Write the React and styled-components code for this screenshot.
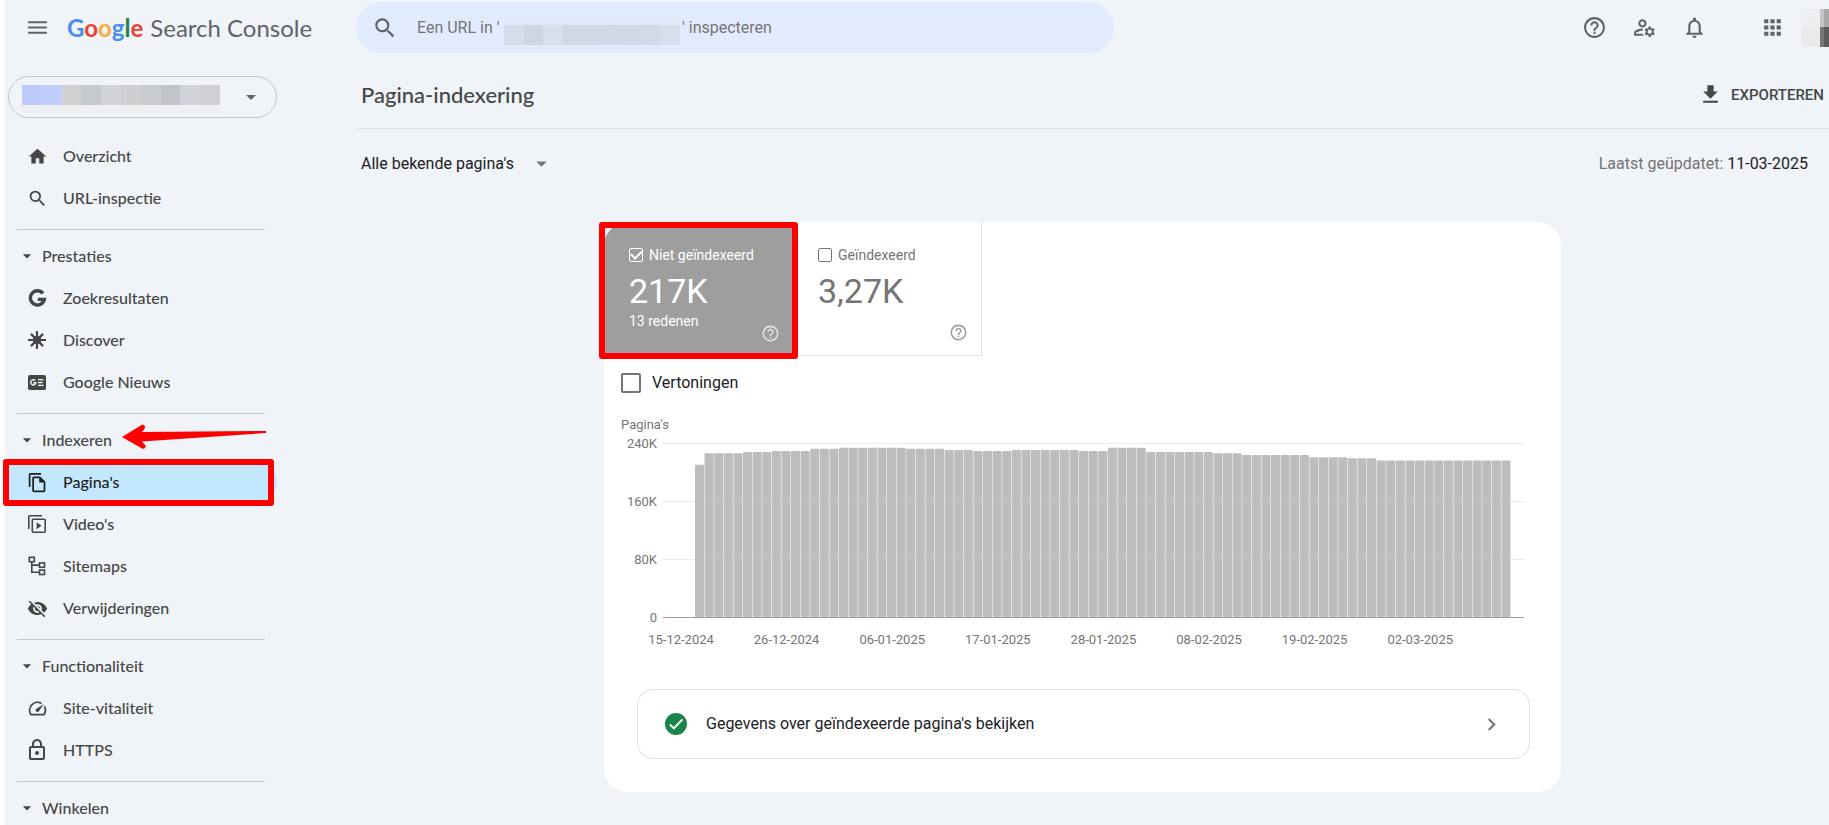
import React from 'react';
import styled, { createGlobalStyle } from 'styled-components';
import {
  MdApps,
  MdArrowDropDown,
  MdChevronRight,
  MdFileDownload,
  MdHelpOutline,
  MdHome,
  MdMenu,
  MdNotificationsNone,
  MdOutlineFileCopy,
  MdOutlineLock,
  MdOutlineManageAccounts,
  MdSearch,
  MdSpeed,
  MdVisibilityOff,
} from 'react-icons/md';

const GlobalStyles = createGlobalStyle`
  :root {
    --bg: #f0f3f8;
    --text: #202124;
    --nav: #444746;
    --muted: #757575;
    --line: #dfe1e5;
    --mark: #ff0000;
    --brand-font: Lato, 'Open Sans', sans-serif;
    --body-font: Roboto, 'Liberation Sans', sans-serif;
  }

  * {
    box-sizing: border-box;
  }

  html,
  body {
    margin: 0;
    overflow: hidden;
  }

  body {
    background: #fff;
    color: var(--text);
    font-family: var(--body-font);
    font-size: 16px;
    line-height: 20px;
  }

  button,
  input,
  select {
    font: inherit;
    color: inherit;
    margin: 0;
    padding: 0;
    border: none;
    background: none;
  }

  svg {
    display: block;
    flex: none;
  }
`;

const PageStyles = styled.div`
  display: grid;
  grid-template-columns: 351px minmax(0, 1fr);
  align-content: start;
  height: 100vh;
  margin-left: 5px;
  background: var(--bg);
`;

const BrandStyles = styled.div`
  display: flex;
  align-items: center;
  gap: 17px;
  height: 55px;
  padding-left: 20px;
  color: #5f6368;

  a {
    display: flex;
    gap: 7px;
    color: inherit;
    font-family: var(--brand-font);
    font-size: 24px;
    line-height: 32px;
    text-decoration: none;
  }
`;

const Letter = styled.span`
  color: ${(props) => props.$color};
  font-weight: 700;
`;

const TopBarStyles = styled.header`
  display: flex;
  align-items: center;
  height: 55px;
`;

const SearchStyles = styled.form`
  display: flex;
  align-items: center;
  flex: 0 1 758px;
  height: 51px;
  padding-left: 16px;
  border-radius: 26px;
  background: #e2ebfd;
  color: var(--muted);

  svg {
    margin-right: 19px;
    color: #5f6368;
  }

  input {
    width: 87px;
    outline: none;
  }

  input::placeholder {
    color: inherit;
    opacity: 1;
  }

  label {
    margin-left: 2px;
  }
`;

const Mosaic = styled.span`
  display: flex;
  width: ${(props) => props.$width}px;
  height: 28px;
  padding: ${(props) => (props.$low ? '8px 0 0' : '0 0 8px')};
  margin-top: ${(props) => (props.$low ? 7 : 4)}px;
  background: ${(props) => props.$haze};

  i {
    flex: 1;
  }
`;

const ActionsStyles = styled.div`
  display: flex;
  align-items: center;
  margin-left: auto;
  color: #5f6368;
`;

const IconButton = styled.button`
  display: flex;
  justify-content: center;
  width: 50px;
  margin-left: ${(props) => (props.$apart ? 28 : 0)}px;
`;

const Avatar = styled.span`
  display: grid;
  grid-template-columns: 19px 4px 5px;
  grid-template-rows: 18px 20px;
  margin-left: 4px;
`;

const Swatch = styled.i`
  background: ${(props) => props.$color};
`;

const SideStyles = styled.nav`
  color: var(--nav);
  font-family: var(--brand-font);
  font-weight: 500;
  padding-top: 21px;
`;

const PropertyButton = styled.button`
  display: flex;
  align-items: center;
  justify-content: space-between;
  width: 269px;
  height: 42px;
  margin: 0 0 17px 3px;
  padding: 0 13px;
  border: 1px solid #c4c7c5;
  border-radius: 21px;
  color: #5f6368;
`;

const NavItem = styled.a`
  position: relative;
  display: flex;
  align-items: center;
  gap: 14px;
  width: 269px;
  height: 42px;
  margin-left: 3px;
  padding-left: 17px;
  border-radius: 0 21px 21px 0;
  background: ${(props) => (props.$active ? '#c2e7ff' : 'none')};
  color: ${(props) => (props.$active ? '#1f1f1f' : 'inherit')};
  text-decoration: none;
`;

const NavIcon = styled.span`
  display: flex;
  justify-content: center;
  width: 24px;
`;

const GroupButton = styled.button`
  position: relative;
  display: flex;
  align-items: center;
  gap: 5px;
  height: 42px;
  padding-left: 12px;
`;

const Divider = styled.hr`
  width: 248px;
  height: 1px;
  margin: 10px 0 5px 12px;
  border: none;
  background: #c4c7c5;
`;

const MarkBox = styled.span`
  position: absolute;
  z-index: 1;
  inset: ${(props) => props.$inset};
  border: 6px solid var(--mark);
  border-radius: 3px;
  pointer-events: none;
`;

const MarkArrow = styled.svg`
  position: absolute;
  left: 117px;
  top: 5px;
`;

const MainStyles = styled.main`
  min-width: 0;
  padding-left: 1px;
`;

const TitleBar = styled.div`
  display: flex;
  align-items: center;
  justify-content: space-between;
  height: 74px;
  padding: 6px 5px 0 4px;
  border-bottom: 1px solid var(--line);

  h1 {
    margin: 0;
    color: var(--nav);
    font-family: var(--brand-font);
    font-size: 22px;
    font-weight: 500;
    line-height: 28px;
  }

  button {
    display: flex;
    align-items: center;
    gap: 8px;
    color: var(--nav);
    font-size: 15px;
    font-weight: 500;
  }
`;

const FilterBar = styled.div`
  display: flex;
  align-items: center;
  justify-content: space-between;
  height: 69px;
  padding: 0 21px 0 4px;

  p {
    margin: 0;
    color: var(--muted);
  }

  strong {
    color: var(--text);
    font-weight: 400;
  }
`;

const SelectWrap = styled.label`
  display: grid;
  align-items: center;
  width: 193px;

  > * {
    grid-area: 1 / 1;
  }

  select {
    appearance: none;
    width: 100%;
  }

  svg {
    justify-self: end;
    color: var(--muted);
    pointer-events: none;
  }
`;

const ContentStyles = styled.div`
  padding: 24px 21px 0 0;
`;

const CardStyles = styled.section`
  max-width: 957px;
  margin: 0 auto;
  padding-bottom: 33px;
  border-radius: 24px;
  background: #fff;
`;

const TilesStyles = styled.div`
  display: flex;
`;

const TileStyles = styled.div`
  position: relative;
  display: flex;
  flex-direction: column;
  width: 189px;
  height: 134px;
  padding: 23px 0 0 25px;
  border: solid var(--line);
  border-width: ${(props) => (props.$active ? '0' : '0 1px 1px 0')};
  border-radius: ${(props) => (props.$active ? '24px 0 0 0' : '0')};
  background: ${(props) => (props.$active ? '#9e9e9e' : '#fff')};
  color: ${(props) => (props.$active ? '#fff' : 'var(--muted)')};
  font-size: 14px;

  label {
    display: flex;
    align-items: center;
    gap: 6px;
  }

  strong {
    margin: 8px 0 2px;
    font-size: 34px;
    font-weight: 400;
    line-height: 36px;
  }

  small {
    font-size: 14px;
  }

  button {
    position: absolute;
    right: 13px;
    bottom: 13px;
    opacity: 0.7;
  }
`;

const TickBox = styled.input`
  display: grid;
  place-items: center;
  flex: none;
  appearance: none;
  width: ${(props) => props.$size}px;
  height: ${(props) => props.$size}px;
  border: ${(props) => (props.$size > 16 ? 2 : 1)}px solid currentColor;
  border-radius: 2px;

  &:checked::after {
    content: '';
    width: 9px;
    height: 5px;
    margin-bottom: 3px;
    border: solid currentColor;
    border-width: 0 0 2px 2px;
    transform: rotate(-45deg);
  }
`;

const ImpressionsLabel = styled.label`
  display: flex;
  align-items: center;
  gap: 11px;
  padding: 17px 17px 0;

  input {
    color: var(--muted);
  }
`;

const ChartStyles = styled.figure`
  margin: 0;
  padding: 22px 37px 0 17px;
  color: var(--muted);
  font-size: 13px;

  svg {
    width: 100%;
    height: auto;
    overflow: visible;
  }

  text {
    fill: var(--muted);
    font-size: 13px;
  }
`;

const DetailLink = styled.a`
  display: flex;
  align-items: center;
  height: 70px;
  margin: 42px 31px 0 33px;
  padding: 0 25px 0 27px;
  border: 1px solid var(--line);
  border-radius: 16px;
  color: var(--text);
  text-decoration: none;

  span {
    flex: 1;
    margin-left: 19px;
  }
`;

const GoogleIcon = () => (
  <svg width="19" height="19" viewBox="0 0 19 19" fill="none" stroke="currentColor" strokeWidth="3.4">
    <path d="M15 4.4A7.1 7.1 0 1 0 16.4 10.4H9.8" />
  </svg>
);

const DiscoverIcon = () => (
  <svg width="18" height="18" viewBox="0 0 18 18" stroke="currentColor" strokeWidth="2.2">
    <path d="M9 0v18M0 9h18M2.9 2.9l12.2 12.2M15.1 2.9L2.9 15.1" />
    <circle cx="9" cy="9" r="3" fill="currentColor" />
  </svg>
);

const NewsIcon = () => (
  <svg width="18" height="15" viewBox="0 0 18 15" fill="none" stroke="#f0f3f8" strokeWidth="1.4">
    <rect width="18" height="15" rx="1.8" fill="currentColor" stroke="none" />
    <path d="M7.2 5.5A2.6 2.6 0 1 0 7.9 7.8H5.3M10 4.6h5.6M10 7.5h4.6M10 10.4h5.6" />
  </svg>
);

const VideoIcon = () => (
  <svg width="18" height="18" viewBox="0 0 18 18" fill="none" stroke="currentColor" strokeWidth="1.6">
    <path d="M.8 14V1.8a1 1 0 0 1 1-1H14" />
    <rect x="4.3" y="4.3" width="12.9" height="12.9" rx="1" />
    <path d="M8.6 7.2v7l5-3.5z" fill="currentColor" stroke="none" />
  </svg>
);

const SitemapIcon = () => (
  <svg width="18" height="20" viewBox="0 0 18 20" fill="none" stroke="currentColor" strokeWidth="1.6">
    <rect x="1.3" y="1.3" width="5" height="4.4" />
    <rect x="11.5" y="6.9" width="5" height="4.4" />
    <rect x="11.5" y="14.1" width="5" height="4.4" />
    <path d="M3.8 5.7v10.6h7.7M3.8 9.1h7.7" />
  </svg>
);

const CheckIcon = () => (
  <svg width="22" height="22" viewBox="0 0 22 22" fill="none">
    <circle cx="11" cy="11" r="11" fill="#188548" />
    <path d="M4.8 11.4l4 4 8.6-9" stroke="#fff" strokeWidth="2" />
  </svg>
);

const navGroups = [
  {
    items: [
      { name: 'Overzicht', icon: <MdHome size={21} /> },
      { name: 'URL-inspectie', icon: <MdSearch size={21} /> },
    ],
  },
  {
    title: 'Prestaties',
    items: [
      { name: 'Zoekresultaten', icon: <GoogleIcon /> },
      { name: 'Discover', icon: <DiscoverIcon /> },
      { name: 'Google Nieuws', icon: <NewsIcon /> },
    ],
  },
  {
    title: 'Indexeren',
    marked: true,
    items: [
      { name: "Pagina's", icon: <MdOutlineFileCopy size={21} />, active: true },
      { name: "Video's", icon: <VideoIcon /> },
      { name: 'Sitemaps', icon: <SitemapIcon /> },
      { name: 'Verwijderingen', icon: <MdVisibilityOff size={21} /> },
    ],
  },
  {
    title: 'Functionaliteit',
    items: [
      { name: 'Site-vitaliteit', icon: <MdSpeed size={21} /> },
      { name: 'HTTPS', icon: <MdOutlineLock size={24} /> },
    ],
  },
  { title: 'Winkelen', items: [] },
];

const brandLetters = [
  ['G', '#4a90e8'],
  ['o', '#ea4335'],
  ['o', '#f9ab3c'],
  ['g', '#4a90e8'],
  ['l', '#188548'],
  ['e', '#ea4335'],
];

const propertyColors = ['#bccbfb', '#c1cdfc', '#cfd1d3', '#c5cacd', '#d1d3d7', '#cdcfd1', '#c9ccd0', '#c2c5c7', '#d0d4da', '#cfd1d4'];
const urlColors = ['#d4deeb', '#ced6e2', '#d7e1ec', '#d0d8e4', '#d0d8e5', '#d0d9e5', '#cfd8e4', '#d1dae6', '#d6dfec'];

// [number of days, thousands of pages]
const series = [
  [1, 210], [4, 226], [3, 227.5], [4, 229], [3, 232], [7, 233.5], [4, 232],
  [3, 230.5], [4, 229], [7, 230.5], [3, 229], [4, 233.5], [7, 227.5],
  [3, 226], [7, 223.5], [4, 220.5], [3, 219], [14, 216],
];
const days = series.flatMap(([count, value]) => Array(count).fill(value));
const dates = ['15-12-2024', '26-12-2024', '06-01-2025', '17-01-2025', '28-01-2025', '08-02-2025', '19-02-2025', '02-03-2025'];
const ticks = [['240K', 0], ['160K', 58], ['80K', 116], ['0', 174]];

function Pixels({ colors, ...props }) {
  return (
    <Mosaic {...props}>
      {colors.map((color, i) => (
        <Swatch key={i} $color={color} />
      ))}
    </Mosaic>
  );
}

function Sidebar() {
  return (
    <SideStyles>
      <PropertyButton type="button" aria-label="Property">
        <Pixels colors={propertyColors} $width={198} $haze="#edeff3" />
        <MdArrowDropDown size={24} />
      </PropertyButton>
      {navGroups.map((group, i) => (
        <React.Fragment key={i}>
          {i > 0 && <Divider />}
          {group.title && (
            <GroupButton type="button">
              <MdArrowDropDown size={20} />
              {group.title}
              {group.marked && (
                <MarkArrow width="144" height="26" viewBox="0 0 144 26" fill="#ff0000">
                  <path d="M0 13L20 .8a2.500 2.500 0 0 1 2.500 4L20 8L144 7V9L20 17.500L23.500 21.500a2.500 2.500 0 0 1-3.500 3z" />
                </MarkArrow>
              )}
            </GroupButton>
          )}
          {group.items.map((item) => (
            <NavItem key={item.name} href="#" $active={item.active}>
              <NavIcon>{item.icon}</NavIcon>
              {item.name}
              {item.active && <MarkBox $inset="-2px 3px -3px -5px" />}
            </NavItem>
          ))}
        </React.Fragment>
      ))}
    </SideStyles>
  );
}

function Chart() {
  return (
    <ChartStyles>
      <figcaption>Pagina's</figcaption>
      <svg viewBox="0 0 903 212">
        {ticks.map(([label, y]) => (
          <g key={label}>
            <text x="36" y={y + 13} textAnchor="end">{label}</text>
            <rect x="42" y={y + 8} width="861" height="1" fill={label === '0' ? '#9e9e9e' : '#ebebeb'} />
          </g>
        ))}
        {days.map((value, i) => {
          const height = value * 0.725;
          return <rect key={i} x={74 + i * 9.6} y={182 - height} width="9.1" height={height} rx="1" fill="#bdbdbd" />;
        })}
        {dates.map((date, i) => (
          <text key={date} x={60 + i * 105.6} y="209" textAnchor="middle">{date}</text>
        ))}
      </svg>
    </ChartStyles>
  );
}

export default function App() {
  return (
    <>
      <GlobalStyles />
      <PageStyles>
        <BrandStyles>
          <button type="button" aria-label="Menu">
            <MdMenu size={25} />
          </button>
          <a href="#">
            <span>
              {brandLetters.map(([letter, color], i) => (
                <Letter key={i} $color={color}>{letter}</Letter>
              ))}
            </span>
            <span>Search Console</span>
          </a>
        </BrandStyles>
        <TopBarStyles>
          <SearchStyles>
            <MdSearch size={26} />
            <input id="inspect" type="text" placeholder="Een URL in '" />
            <Pixels colors={urlColors} $width={176} $haze="#dfe8f9" $low />
            <label htmlFor="inspect">' inspecteren</label>
          </SearchStyles>
          <ActionsStyles>
            <IconButton type="button" aria-label="Help"><MdHelpOutline size={25} /></IconButton>
            <IconButton type="button" aria-label="Gebruikers"><MdOutlineManageAccounts size={25} /></IconButton>
            <IconButton type="button" aria-label="Meldingen"><MdNotificationsNone size={25} /></IconButton>
            <IconButton type="button" aria-label="Apps" $apart><MdApps size={25} /></IconButton>
            <Avatar>
              <Swatch $color="#eceef1" />
              <Swatch $color="#c4c5c7" />
              <Swatch $color="#a9a9aa" />
              <Swatch $color="#e9eaec" />
              <Swatch $color="#767778" />
              <Swatch $color="#5c5c5d" />
            </Avatar>
          </ActionsStyles>
        </TopBarStyles>
        <Sidebar />
        <MainStyles>
          <TitleBar>
            <h1>Pagina-indexering</h1>
            <button type="button">
              <MdFileDownload size={25} />
              EXPORTEREN
            </button>
          </TitleBar>
          <FilterBar>
            <SelectWrap>
              <select aria-label="Pagina's">
                <option>Alle bekende pagina's</option>
              </select>
              <MdArrowDropDown size={25} />
            </SelectWrap>
            <p>
              Laatst geüpdatet: <strong>11-03-2025</strong>
            </p>
          </FilterBar>
          <ContentStyles>
            <CardStyles>
              <TilesStyles>
                <TileStyles $active>
                  <label>
                    <TickBox type="checkbox" $size={14} defaultChecked />
                    Niet geïndexeerd
                  </label>
                  <strong>217K</strong>
                  <small>13 redenen</small>
                  <button type="button" aria-label="Uitleg"><MdHelpOutline size={19} /></button>
                  <MarkBox $inset="0 -5px -3px -5px" />
                </TileStyles>
                <TileStyles>
                  <label>
                    <TickBox type="checkbox" $size={14} />
                    Geïndexeerd
                  </label>
                  <strong>3,27K</strong>
                  <button type="button" aria-label="Uitleg"><MdHelpOutline size={19} /></button>
                </TileStyles>
              </TilesStyles>
              <ImpressionsLabel>
                <TickBox type="checkbox" $size={20} />
                Vertoningen
              </ImpressionsLabel>
              <Chart />
              <DetailLink href="#">
                <CheckIcon />
                <span>Gegevens over geïndexeerde pagina's bekijken</span>
                <MdChevronRight size={25} color="#757575" />
              </DetailLink>
            </CardStyles>
          </ContentStyles>
        </MainStyles>
      </PageStyles>
    </>
  );
}
